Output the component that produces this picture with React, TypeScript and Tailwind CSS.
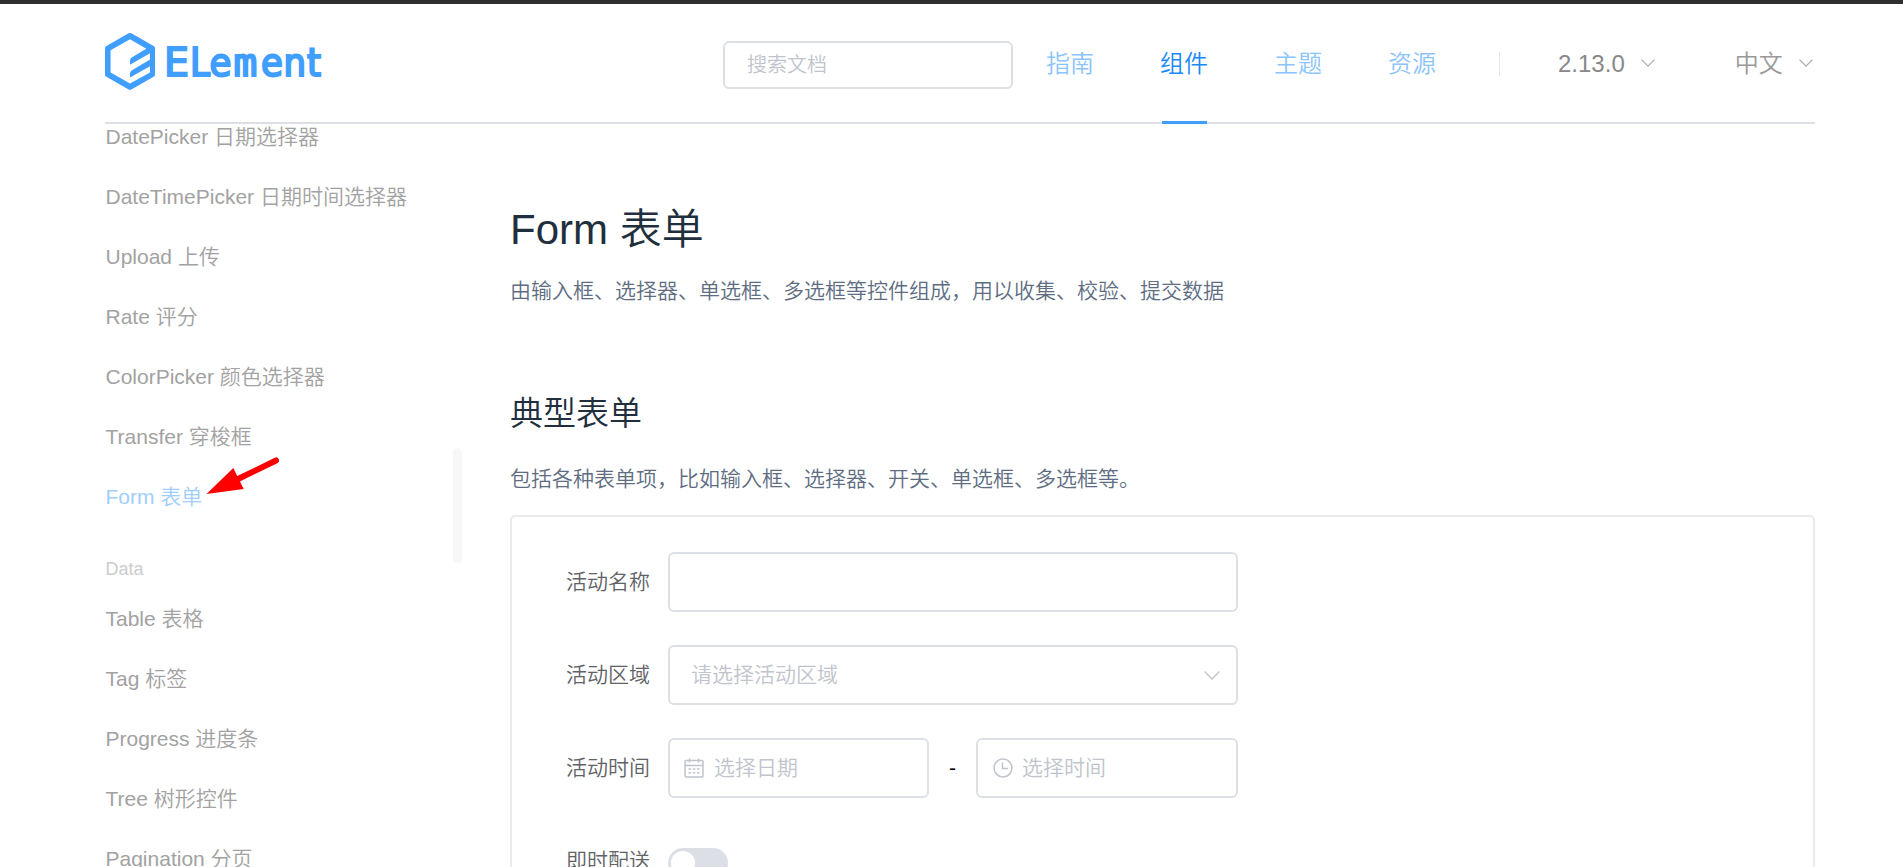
import type { ReactNode } from "react";

const NAV_ITEMS = ["指南", "组件", "主题", "资源"];

const FORM_LINKS = [
  "DatePicker 日期选择器",
  "DateTimePicker 日期时间选择器",
  "Upload 上传",
  "Rate 评分",
  "ColorPicker 颜色选择器",
  "Transfer 穿梭框",
  "Form 表单",
];

const DATA_LINKS = ["Table 表格", "Tag 标签", "Progress 进度条", "Tree 树形控件", "Pagination 分页"];

function Logo() {
  return (
    <svg className="h-[60px] w-[220px]" viewBox="0 0 220 60" fill="#409eff">
      <path
        fillRule="evenodd"
        d="M23.6 1.3Q25 .6 26.4 1.3L49 14.2Q50 14.9 50 16.2V42.5Q50 43.8 49 44.5L26.4 57.4Q25 58.1 23.6 57.4L1 44.5Q0 43.8 0 42.5V16.2Q0 14.9 1 14.2ZM25 7.2L5.6 18.2V40.4L25 51.6L45 40.4V34.2L25 45.6V41.6Q25 39.5 27 38.2L45 27.6V21.2L25 32.8V28.6Q25 26.5 27 25.3L41.3 16.8Z"
      />
      <text
        y="44"
        fontFamily="'DejaVu Sans Condensed', 'DejaVu Sans', sans-serif"
        fontStretch="condensed"
        fontWeight="400"
        fontSize="39.5"
        stroke="#409eff"
        strokeWidth="2"
      >
        <tspan x="59" fontFamily="'DejaVu Sans', sans-serif" fontStretch="normal">E</tspan>
        <tspan x="85 104.500">Le</tspan>
        <tspan x="128.500" fontFamily="'DejaVu Sans Mono', monospace">m</tspan>
        <tspan x="156 178.500 202">ent</tspan>
      </text>
    </svg>
  );
}

function Chevron({ className }: { className: string }) {
  return (
    <svg className={className} viewBox="0 0 16 9" fill="none" stroke="currentColor" strokeWidth="1.4">
      <path d="M.6.6L8 8L15.4.6" />
    </svg>
  );
}

function CalendarIcon() {
  return (
    <svg className="size-5" viewBox="0 0 20 20" fill="none" stroke="currentColor" strokeWidth="1.5">
      <rect x="1" y="2.500" width="18" height="16.500" rx="1" />
      <path d="M1 7.500H19M5.500 0.500V4.500M14.500 0.500V4.500" />
      <path d="M4.500 11H7M8.800 11H11.300M13 11H15.500M4.500 14.800H7M8.800 14.800H11.300M13 14.800H15.500" />
    </svg>
  );
}

function ClockIcon() {
  return (
    <svg className="size-5" viewBox="0 0 20 20" fill="none" stroke="currentColor" strokeWidth="1.5">
      <circle cx="10" cy="10" r="9" />
      <path d="M9.500 4.500V10.500H15" />
    </svg>
  );
}

function SideLink({ label, active }: { label: string; active?: boolean }) {
  return (
    <a className={`block h-[60px] pl-[0.5px] text-[21px] leading-[60px] whitespace-nowrap ${active ? "text-[#9fcefe]" : "text-[#a2a2a2]"}`}>
      {label}
    </a>
  );
}

function FormRow({ label, children }: { label: string; children?: ReactNode }) {
  return (
    <div className="mb-[33px] flex h-[60px] items-center">
      <label className="w-[138px] pr-[18px] text-right text-[21px] leading-[58px] text-[#606266]">{label}</label>
      <div className="flex w-[570px] items-center">{children}</div>
    </div>
  );
}

export default function App() {
  return (
    <div className="h-screen overflow-hidden bg-white font-['Liberation_Sans','Noto_Sans_CJK_SC',sans-serif] font-[350]">
      <div className="h-1 bg-[#2e2e2e]" />

      {/* Header */}
      <header className="ml-[105px] flex h-[120px] w-[1710px] border-b-2 border-[#dcdfe6]">
        <div className="w-[618px] pt-7">
          <Logo />
        </div>
        <div className="mt-[37px] h-12 w-[290px] rounded-md border-2 border-[#dcdfe6] pl-[22px] text-[20px] leading-[45px] text-[#c0c4cc]">
          搜索文档
        </div>
        <nav className="ml-[33px] flex gap-[66px] text-[24px] leading-[120px]">
          {NAV_ITEMS.map((item) => (
            <a key={item} className={`relative w-12 whitespace-nowrap ${item === "组件" ? "text-[#1989fa]" : "text-[#8cc4fd]"}`}>
              {item}
              {item === "组件" && <span className="absolute -bottom-0.5 left-0.5 h-[3px] w-[45px] bg-[#409eff]" />}
            </a>
          ))}
        </nav>
        <div className="mt-12 ml-[63px] h-6 w-px bg-[#e6e6e6]" />
        <div className="ml-[58px] flex items-center gap-4 pt-px text-[24px] text-[#888]">
          2.13.0
          <Chevron className="mb-0.5 h-2 w-[14px] text-[#aaa]" />
        </div>
        <div className="ml-20 flex items-center gap-4 pt-px text-[24px] text-[#999]">
          中文
          <Chevron className="mb-0.5 h-2 w-[14px] text-[#aaa]" />
        </div>
      </header>

      <div className="ml-[105px] flex w-[1710px]">
        {/* Sidebar */}
        <aside className="relative -mt-[17px] w-[405px]">
          {FORM_LINKS.map((label) => (
            <SideLink key={label} label={label} active={label === "Form 表单"} />
          ))}
          <div className="mt-[23px] h-[39px] pl-[0.5px] text-[18px] leading-[39px] text-[#ccc]">Data</div>
          {DATA_LINKS.map((label) => (
            <SideLink key={label} label={label} />
          ))}
          <span className="absolute top-[341px] left-[348px] h-[115px] w-[9px] rounded-full bg-[#f7f7f7]" />
          <svg className="absolute top-[348px] left-[100px] h-[44px] w-[80px]" viewBox="205 455 80 44" fill="#f00">
            <path d="M206.500 494L233.300 468L243.700 489Z" />
            <path d="M236 480L276 460.500" stroke="#f00" strokeWidth="6" strokeLinecap="round" />
          </svg>
        </aside>

        {/* Page content */}
        <main className="w-[1305px] pt-[73px]">
          <h2 className="h-16 text-[42px] leading-[65px] text-[#1f2f3d]">Form 表单</h2>
          <p className="h-[60px] text-[21px] leading-[60px] text-[#5e6d82]">
            由输入框、选择器、单选框、多选框等控件组成，用以收集、校验、提交数据
          </p>
          <h3 className="mt-[68px] h-[49px] text-[33px] leading-[50px] text-[#1f2f3d]">典型表单</h3>
          <p className="mt-[11px] h-[60px] text-[21px] leading-[60px] text-[#5e6d82]">
            包括各种表单项，比如输入框、选择器、开关、单选框、多选框等。
          </p>

          <section className="mt-1.5 h-[600px] rounded-[5px] border-2 border-[#ebebeb] pt-[35px] pl-[18px]">
            <FormRow label="活动名称">
              <div className="h-[60px] w-full rounded-md border-2 border-[#dcdfe6]" />
            </FormRow>
            <FormRow label="活动区域">
              <div className="flex h-[60px] w-full items-center justify-between rounded-md border-2 border-[#dcdfe6] pr-4 pl-[21px] text-[21px] text-[#c0c4cc]">
                请选择活动区域
                <Chevron className="h-[9px] w-4" />
              </div>
            </FormRow>
            <FormRow label="活动时间">
              <div className="flex h-[60px] w-[261px] items-center gap-2.5 rounded-md border-2 border-[#dcdfe6] pl-3.5 text-[21px] text-[#c0c4cc]">
                <CalendarIcon />
                选择日期
              </div>
              <span className="w-[47px] text-center text-[21px] text-black">-</span>
              <div className="flex h-[60px] w-[262px] items-center gap-[9px] rounded-md border-2 border-[#dcdfe6] pl-[15px] text-[21px] text-[#c0c4cc]">
                <ClockIcon />
                选择时间
              </div>
            </FormRow>
            <FormRow label="即时配送">
              <div className="mt-1 h-[30px] w-[60px] rounded-full bg-[#dcdfe6] p-[3px]">
                <div className="size-6 rounded-full bg-white" />
              </div>
            </FormRow>
          </section>
        </main>
      </div>
    </div>
  );
}
